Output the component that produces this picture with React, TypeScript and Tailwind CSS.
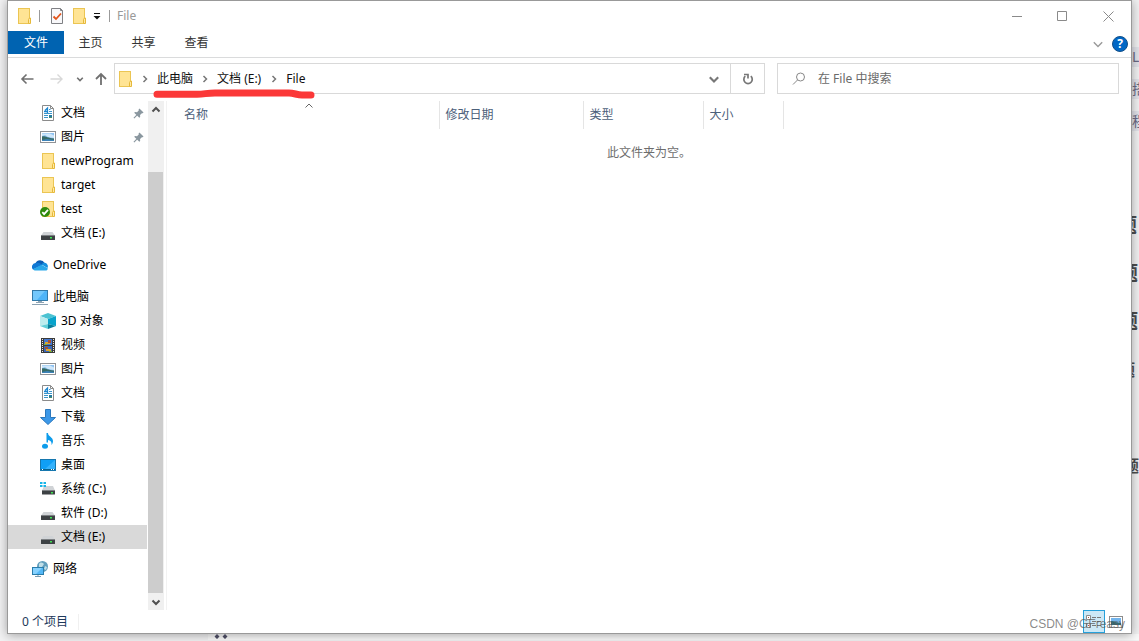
import type { ReactNode } from "react";

function Svg({ children }: { children: ReactNode }) {
  return (
    <svg width="16" height="16" viewBox="0 0 16 16" className="shrink-0" aria-hidden="true">
      {children}
    </svg>
  );
}

function FolderShape() {
  return (
    <>
      <rect x="2" y="0" width="12" height="16" fill="#ebc553" />
      <rect x="3" y="1" width="10" height="14" fill="#ffe494" />
      <path d="M12.500 15.500v-4l1-1.500h1v5.500z" fill="#ffe9a6" stroke="#e6b93a" />
    </>
  );
}

function FolderIcon() {
  return (
    <Svg>
      <FolderShape />
    </Svg>
  );
}

function SyncedFolderIcon() {
  return (
    <Svg>
      <FolderShape />
      <circle cx="5" cy="11" r="5" fill="#2f8a0c" />
      <path d="M2.300 11.200l1.800 1.900L8 8.900" fill="none" stroke="#fff" strokeWidth="1.800" />
    </Svg>
  );
}

function DocumentIcon() {
  return (
    <Svg>
      <path d="M2.500 0.500h8l3 3v12h-11z" fill="#fff" stroke="#8b8b8b" />
      <path d="M10.500 0.500v3h3" fill="none" stroke="#8b8b8b" />
      <path d="M4 8.500h8M4 10.500h4M4 12.500h4M9 4.500h1.500M9 6.500h3" stroke="#3c96cc" />
      <path d="M4 6.500h4M5 5.500l2.500-2.500v5" fill="none" stroke="#1c86cf" strokeWidth="1.300" />
      <rect x="9" y="10" width="3" height="2" fill="#257aa0" />
      <path d="M9 12.500h3" stroke="#4b8b68" />
    </Svg>
  );
}

function PictureIcon() {
  return (
    <Svg>
      <rect x="0.500" y="2.500" width="15" height="11" fill="#fff" stroke="#8f9296" />
      <rect x="2" y="4" width="12" height="8" fill="#8ec2f2" />
      <path d="M2 7l3-1 3 2 6 1V6.500l-4-2H2z" fill="#cfe7fa" />
      <path d="M2 7.500c3-1 5 1.500 12 2V12H2z" fill="#376b67" />
      <path d="M2 11l5-1 7 1v1H2z" fill="#3d83b8" />
    </Svg>
  );
}

function DriveIcon() {
  return (
    <Svg>
      <path d="M3.500 7h9L15 10.500H1z" fill="#d0d3d6" />
      <rect x="1" y="10" width="14" height="5" rx="0.500" fill="#3d4144" />
      <path d="M1 10.500h14" stroke="#7c8083" />
      <rect x="10" y="12" width="2" height="1.500" fill="#3fe152" />
    </Svg>
  );
}

function SystemDriveIcon() {
  return (
    <Svg>
      <path d="M4 5h9l2 4.500H2z" fill="#d0d3d6" />
      <rect x="2" y="9" width="13" height="4.500" rx="0.500" fill="#3d4144" />
      <path d="M2 9.500h13" stroke="#7c8083" />
      <rect x="11" y="11" width="2" height="1.500" fill="#3fe152" />
      <path d="M0 1h2.500v2H0zM3.500 1H6v2H3.500zM0 4h2.500v2H0zM3.500 4H6v2H3.500z" fill="#17b5e8" />
    </Svg>
  );
}

function CloudIcon() {
  return (
    <Svg>
      <path d="M3.500 6.200A5 5 0 0 1 12.600 6L8 10z" fill="#0a5cb4" />
      <path d="M3.400 6a3.800 3.800 0 0 0-2.400 6.400L10.500 8C8 6 6 5.600 3.400 6z" fill="#0f78d4" />
      <path d="M9.500 7.500c1-1.600 2-2 3.200-1.800A3.700 3.700 0 0 1 15.500 11z" fill="#1490df" />
      <path d="M1 12.300L9.500 7.700l6.200 3.500c.2 1.400-.8 2.300-2.200 2.300H3.700c-1.200 0-2.200-.4-2.700-1.200z" fill="#28a8ea" />
    </Svg>
  );
}

function ComputerIcon() {
  return (
    <Svg>
      <rect x="0.500" y="1.500" width="15" height="10" fill="#4eb4f8" stroke="#3279a8" />
      <path d="M1 2h12L5 11H1z" fill="#73c8fc" />
      <path d="M6 12h4v1H6z" fill="#8fa7b8" />
      <path d="M4 13.500h8M0 15.500h16" stroke="#8da3b3" />
    </Svg>
  );
}

function CubeIcon() {
  return (
    <Svg>
      <path d="M8 0l8 3-8 3-8-3z" fill="#4cc3d2" />
      <path d="M0 3l8 3v5l-8 2z" fill="#bdecee" />
      <path d="M16 3L8 6v5l8 2z" fill="#08a3cb" />
      <path d="M0 13l8-2v5z" fill="#62cfd9" />
      <path d="M16 13l-8-2v5z" fill="#087f9b" />
    </Svg>
  );
}

function VideoIcon() {
  return (
    <Svg>
      <rect x="1" y="1" width="14" height="15" fill="#3b3b3b" />
      <path d="M2.500 2v13M13.500 2v13" stroke="#e8e8e8" strokeDasharray="1 1" />
      <rect x="4" y="2" width="8" height="6" fill="#4478d0" />
      <rect x="4" y="9" width="8" height="6" fill="#3b68ba" />
      <path d="M5 5h5v2H5zM6 12h5v2H6z" fill="#dba52f" />
      <path d="M8 3h3v3H8zM5 10h3v2H5z" fill="#a65033" />
      <path d="M4 7h3v1H4zM9 14h3v1H9z" fill="#74b33e" />
    </Svg>
  );
}

function DownloadIcon() {
  return (
    <Svg>
      <path d="M5.500 0.500h5v8h5L8 15.500 0.500 8.500h5z" fill="#3c98e8" stroke="#2b78bd" />
    </Svg>
  );
}

function MusicIcon() {
  return (
    <Svg>
      <ellipse cx="5" cy="13.300" rx="3" ry="2.500" fill="#0d9ceb" />
      <path d="M6.500 0H8c0 3.500 5 4 5 8 0 1.700-.7 3-1.500 4 .5-3-1-4.500-3.500-5v2.500H6.500z" fill="#0d9ceb" />
    </Svg>
  );
}

function DesktopIcon() {
  return (
    <Svg>
      <rect x="0.500" y="2.500" width="15" height="11" fill="#109ff5" stroke="#1677ae" />
      <path d="M15 3L5 12h10z" fill="#35b2fc" />
      <path d="M1 12.500h14" stroke="#08628d" />
      <path d="M2 12.500h1M11 12.500h1M13 12.500h1" stroke="#fff" />
    </Svg>
  );
}

function NetworkIcon() {
  return (
    <Svg>
      <circle cx="10.500" cy="5.500" r="5.500" fill="#629fbd" />
      <path d="M7 3c2-3 4-1 5 0l-2 3-3 1zM13 5l2 1-1 3-2-1z" fill="#c1dfe8" />
      <rect x="0.500" y="6.500" width="11" height="7" fill="#54b8f7" stroke="#2a7dab" />
      <path d="M1 7h9l-6 6H1z" fill="#87d2ff" />
      <path d="M3 15.500h6M6 14v1" stroke="#789bb0" />
    </Svg>
  );
}

function PinIcon() {
  return (
    <svg width="11" height="11" viewBox="0 0 12 12" className="shrink-0" aria-hidden="true">
      <path d="M7 0.500L11.500 5l-1 .8-.8-.1-2 2 .1 2-.9.9L1.300 5.200l.9-.9 2.200.2 2-2-.3-1z" fill="#8a979f" />
      <path d="M4.500 7.500L1 11" stroke="#8a979f" strokeWidth="1.300" />
    </svg>
  );
}

type Direction = "up" | "down" | "right";

const chevrons: Record<Direction, string> = {
  up: "M1.500 6.500L5 3l3.500 3.500",
  down: "M1.500 3.500L5 7l3.500-3.500",
  right: "M3.500 2L6.500 5l-3 3",
};

function Chevron({ dir, size = 10, width = 1.5 }: { dir: Direction; size?: number; width?: number }) {
  return (
    <svg width={size} height={size} viewBox="0 0 10 10" className="shrink-0" fill="none" stroke="currentColor" strokeWidth={width} aria-hidden="true">
      <path d={chevrons[dir]} />
    </svg>
  );
}

type Item = { label: string; icon: () => ReactNode; root?: boolean; pinned?: boolean; active?: boolean };

const groups: Item[][] = [
  [
    { label: "文档", icon: DocumentIcon, pinned: true },
    { label: "图片", icon: PictureIcon, pinned: true },
    { label: "newProgram", icon: FolderIcon },
    { label: "target", icon: FolderIcon },
    { label: "test", icon: SyncedFolderIcon },
    { label: "文档 (E:)", icon: DriveIcon },
  ],
  [{ label: "OneDrive", icon: CloudIcon, root: true }],
  [
    { label: "此电脑", icon: ComputerIcon, root: true },
    { label: "3D 对象", icon: CubeIcon },
    { label: "视频", icon: VideoIcon },
    { label: "图片", icon: PictureIcon },
    { label: "文档", icon: DocumentIcon },
    { label: "下载", icon: DownloadIcon },
    { label: "音乐", icon: MusicIcon },
    { label: "桌面", icon: DesktopIcon },
    { label: "系统 (C:)", icon: SystemDriveIcon },
    { label: "软件 (D:)", icon: DriveIcon },
    { label: "文档 (E:)", icon: DriveIcon, active: true },
  ],
  [{ label: "网络", icon: NetworkIcon, root: true }],
];

function NavItem({ item }: { item: Item }) {
  const Icon = item.icon;
  return (
    <li>
      <a
        href="#"
        className={`flex h-6 items-center gap-[5px] pr-[3px] ${item.root ? "pl-6" : "pl-8"} ${item.active ? "bg-[#d9d9d9]" : "hover:bg-[#e5f3ff]"}`}
      >
        <Icon />
        <span className="flex-1 whitespace-nowrap">{item.label}</span>
        {item.pinned && <PinIcon />}
      </a>
    </li>
  );
}

function TitleBar() {
  return (
    <div className="flex h-[30px] items-center">
      <div className="flex flex-1 items-center pl-2">
        <FolderIcon />
        <span className="ml-[7px] h-3 w-px bg-[#9a9a9a]" />
        <button type="button" aria-label="属性" className="ml-[9px]">
          <Svg>
            <path d="M2.500 0.500h9l2 2v13h-11z" fill="#f8f8fa" stroke="#7f8084" />
            <path d="M11.500 0.500v2h2" fill="none" stroke="#7f8084" />
            <path d="M4.500 8.500L7 11l5-5.500" fill="none" stroke="#e2541b" strokeWidth="1.800" />
          </Svg>
        </button>
        <button type="button" aria-label="新建文件夹" className="ml-[6px]">
          <FolderIcon />
        </button>
        <button type="button" aria-label="自定义快速访问工具栏" className="ml-[6px]">
          <svg width="8" height="8" viewBox="0 0 8 8" aria-hidden="true">
            <path d="M1 1.500h6" stroke="#111" />
            <path d="M0.500 4h7L4 7.500z" fill="#111" />
          </svg>
        </button>
        <span className="ml-2 h-3 w-px bg-[#9a9a9a]" />
        <span className="ml-[7px] text-[#999]">File</span>
      </div>
      <div className="flex text-[#8a8a8a]">
        <button type="button" aria-label="最小化" className="flex h-[29px] w-[45px] items-center justify-center">
          <svg width="11" height="11" viewBox="0 0 11 11" fill="none" stroke="currentColor"><path d="M0 5.500h10" /></svg>
        </button>
        <button type="button" aria-label="最大化" className="flex h-[29px] w-[45px] items-center justify-center">
          <svg width="11" height="11" viewBox="0 0 11 11" fill="none" stroke="currentColor"><path d="M0.500 0.500h9v9h-9z" /></svg>
        </button>
        <button type="button" aria-label="关闭" className="flex h-[29px] w-[46px] items-center justify-center">
          <svg width="11" height="11" viewBox="0 0 11 11" fill="none" stroke="currentColor"><path d="M0.500 0.500l10 10M10.500 0.500l-10 10" /></svg>
        </button>
      </div>
    </div>
  );
}

function Ribbon() {
  return (
    <div className="flex h-[27px] items-start border-b border-[#dadbdc] text-[#333]">
      <button type="button" className="h-[23px] w-14 bg-[#0063b1] text-white">文件</button>
      <button type="button" className="h-6 w-[53px]">主页</button>
      <button type="button" className="h-6 w-[53px]">共享</button>
      <button type="button" className="h-6 w-[53px]">查看</button>
      <div className="ml-auto flex h-[26px] items-center gap-2 pr-[3px]">
        <button type="button" aria-label="展开功能区" className="text-[#9a9a9a]">
          <Chevron dir="down" size={12} width={1.2} />
        </button>
        <button type="button" aria-label="帮助" className="flex size-4 items-center justify-center rounded-full border border-[#124f88] bg-[#0067c5] text-xs font-bold text-white">
          ?
        </button>
      </div>
    </div>
  );
}

function AddressBar() {
  return (
    <div className="flex px-3 pt-[5px] pb-[7px]">
      <div className="flex w-[94px] shrink-0 items-center text-[#707070]">
        <button type="button" aria-label="后退">
          <svg width="14" height="14" viewBox="0 0 14 14" fill="none" stroke="currentColor" strokeWidth="1.600"><path d="M13.500 7H2M6.500 2.500L2 7l4.500 4.500" /></svg>
        </button>
        <button type="button" aria-label="前进" className="ml-4 text-[#d8d8d8]">
          <svg width="14" height="14" viewBox="0 0 14 14" fill="none" stroke="currentColor" strokeWidth="1.400"><path d="M0.500 7H12M7.500 2.500L12 7l-4.500 4.500" /></svg>
        </button>
        <button type="button" aria-label="最近浏览的位置" className="ml-3">
          <Chevron dir="down" size={8} width={2} />
        </button>
        <button type="button" aria-label="上移" className="ml-[10px]">
          <svg width="14" height="14" viewBox="0 0 14 14" fill="none" stroke="currentColor" strokeWidth="1.800"><path d="M7 13V2M2 7l5-5 5 5" /></svg>
        </button>
      </div>
      <div className="relative flex h-[31px] flex-1 border border-[#d9d9d9]">
        <nav aria-label="地址" className="flex flex-1 items-center gap-[7px] pl-[2px] whitespace-nowrap text-[#111]">
          <FolderIcon />
          <span className="text-[#777]"><Chevron dir="right" /></span>
          <a href="#">此电脑</a>
          <span className="text-[#777]"><Chevron dir="right" /></span>
          <a href="#">文档 (E:)</a>
          <span className="pl-px text-[#777]"><Chevron dir="right" /></span>
          <a href="#">File</a>
        </nav>
        <button type="button" aria-label="以前的位置" className="flex w-8 items-center justify-center text-[#777]">
          <Chevron dir="down" size={12} width={1.8} />
        </button>
        <button type="button" aria-label="刷新" className="flex w-[34px] items-center justify-center border-l border-[#d9d9d9] text-[#777]">
          <svg width="12" height="12" viewBox="0 0 12 12" fill="none" stroke="currentColor" strokeWidth="1.700">
            <path d="M8.800 3.200A4.200 4.200 0 1 1 3.300 3.200" />
            <path d="M2 1.500h4v4" />
          </svg>
        </button>
        {/* red marker stroke under the path */}
        <svg width="162" height="10" viewBox="0 0 162 10" className="absolute top-[25px] left-[38px] z-10" fill="none" aria-hidden="true">
          <path d="M4 5.200h40c8 0 9-1.200 18-1.200h74c5 0 8 2 13 2h9" stroke="#fb3838" strokeWidth="7" strokeLinecap="round" />
        </svg>
      </div>
      <label className="ml-3 flex h-[31px] w-[342px] items-center gap-3 border border-[#d9d9d9] pl-[14px]">
        <svg width="14" height="14" viewBox="0 0 14 14" fill="none" stroke="#888" aria-hidden="true">
          <circle cx="8.500" cy="5" r="4" />
          <path d="M5.500 8L1 12.500" />
        </svg>
        <input
          type="text"
          aria-label="在 File 中搜索"
          placeholder="在 File 中搜索"
          className="min-w-0 flex-1 outline-none placeholder:text-[#6a6a6a]"
        />
      </label>
    </div>
  );
}

function Sidebar() {
  return (
    <div className="flex shrink-0 border-r border-[#f2f2f2] pr-[2px]">
      <nav aria-label="导航窗格" className="flex w-[139px] flex-col gap-2 text-black">
        {groups.map((group, i) => (
          <ul key={i}>
            {group.map((item) => (
              <NavItem key={item.label} item={item} />
            ))}
          </ul>
        ))}
      </nav>
      <div className="ml-px flex w-4 flex-col bg-[#f0f0f0] text-[#505050]">
        <button type="button" aria-label="向上滚动" className="flex h-[17px] items-center justify-center">
          <Chevron dir="up" width={2} />
        </button>
        <div className="flex flex-1 flex-col pt-[54px]">
          <div className="mr-px flex-1 bg-[#cdcdcd]" />
        </div>
        <button type="button" aria-label="向下滚动" className="flex h-[17px] items-center justify-center">
          <Chevron dir="down" width={2} />
        </button>
      </div>
    </div>
  );
}

function FileList() {
  return (
    <main className="min-w-0 flex-1">
      <table className="w-full table-fixed">
        <thead>
          <tr className="h-7 text-left text-[#4c607a]">
            <th className="relative w-[272px] border-r border-[#e5e5e5] pl-[17px] font-normal">
              名称
              <span className="absolute top-0 left-[137px] text-[#666]"><Chevron dir="up" width={1} /></span>
            </th>
            <th className="w-36 border-r border-[#e5e5e5] pl-[6px] font-normal">修改日期</th>
            <th className="w-[120px] border-r border-[#e5e5e5] pl-[6px] font-normal">类型</th>
            <th className="w-20 border-r border-[#e5e5e5] pl-[6px] font-normal">大小</th>
            <th aria-hidden="true" />
          </tr>
        </thead>
        <tbody>
          <tr>
            <td colSpan={5} className="h-12 text-center text-[#6d6d6d]">此文件夹为空。</td>
          </tr>
        </tbody>
      </table>
    </main>
  );
}

function StatusBar() {
  return (
    <footer className="relative flex h-[23px] items-center pl-[14px] text-[#1e395b]">
      <span className="border-r border-[#f0f0f0] pr-[10px]">0 个项目</span>
      <div className="ml-auto flex items-center gap-1 pr-2">
        <button type="button" aria-label="详细信息" className="flex h-[23px] w-[22px] items-center justify-center border border-[#26a0da] bg-[#cce8f6]">
          <svg width="16" height="14" viewBox="0 0 16 14" fill="none">
            <path d="M0.500 0.500h4v4h-4zM0.500 8.500h4v4h-4z" fill="#fff" stroke="#8c8c8c" />
            <path d="M2 2.500h1M2 10.500h1" stroke="#b3503d" />
            <path d="M6 2.500h4M11 2.500h4M6 6.500h4M11 6.500h4M6 10.500h4M11 10.500h4" stroke="#777" />
          </svg>
        </button>
        <button type="button" aria-label="大缩略图">
          <svg width="14" height="12" viewBox="0 0 14 12">
            <rect x="0.500" y="0.500" width="13" height="11" fill="#fff" stroke="#8c8c8c" />
            <rect x="2" y="2" width="10" height="7" fill="#72b4ec" />
            <path d="M2 5c4 0 5 2 10 2v2H2z" fill="#356b75" />
          </svg>
        </button>
      </div>
      <span className="absolute top-[6px] right-[6px] font-['Liberation_Sans'] text-xs text-[#555]/70">
        CSDN @GFreasy
      </span>
    </footer>
  );
}

// Sliver of the page that stays visible to the right of the window
function PageEdge() {
  return (
    <div className="w-[7px] shrink-0 overflow-hidden bg-[#f2f2f3] text-[#4d4d4d]">
      <div className="flex h-[202px] flex-col gap-3 pt-[47px] text-sm leading-5 text-[#6b6b86]">
        <span className="bg-[#e2e3ea]">L</span>
        <span className="bg-[#e2e3ea]">搭</span>
        <span className="bg-[#e2e3ea]">程</span>
      </div>
      <div className="flex flex-col text-xl leading-[48px] font-bold">
        <span className="flex justify-end pr-[2px]">题</span>
        <span className="flex justify-end pr-px">题</span>
        <span className="flex justify-end pr-px">题</span>
        <span className="flex justify-end pr-1 text-base leading-[48px]">题</span>
        <span className="mt-12 flex justify-end text-base leading-[48px]">题</span>
      </div>
    </div>
  );
}

export default function App() {
  return (
    <div className="flex min-h-screen flex-col overflow-hidden bg-[#f2f2f3] font-['Noto_Sans','Noto_Sans_CJK_SC',sans-serif] text-xs">
      <div className="flex flex-1">
        <div className="w-[7px] shrink-0" />
        <div className="relative z-10 flex min-w-0 flex-1 flex-col border border-[#999] bg-white shadow-[0_1px_10px_rgba(0,0,0,0.35)]">
          <TitleBar />
          <Ribbon />
          <AddressBar />
          <div className="flex flex-1">
            <Sidebar />
            <FileList />
          </div>
          <StatusBar />
        </div>
        <PageEdge />
      </div>
      <div className="flex h-[7px] items-start pl-[208px]">
        <div className="flex-1 bg-[#fafafa] pl-[6px]">
          <svg width="14" height="6" viewBox="0 0 14 6" className="relative z-20" fill="#45455a" aria-hidden="true">
            <path d="M3 0l2.500 2.500L3 5 0.500 2.500zM11 0l2.500 2.500L11 5 8.500 2.500z" />
          </svg>
        </div>
      </div>
    </div>
  );
}
